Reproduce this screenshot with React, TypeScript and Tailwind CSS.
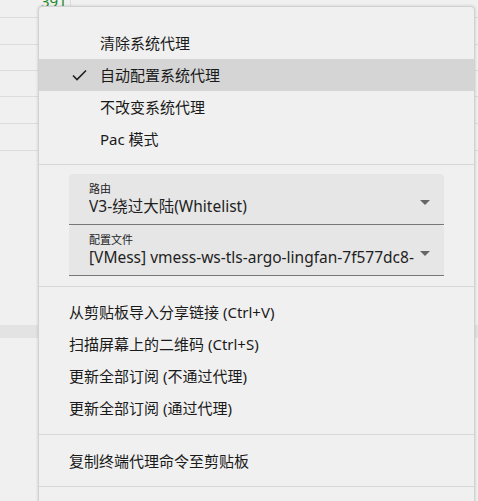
import React from "react";

const font = { fontFamily: '"Noto Sans", "Noto Sans CJK SC", sans-serif' };

const Check = () => (
  <svg width="15" height="12" viewBox="0 0 15 12" fill="none">
    <path d="M1 6.5 L5 10.5 L14 1.5" stroke="#1f1f1f" strokeWidth="1.6" />
  </svg>
);

const Caret = () => (
  <svg width="10" height="5" viewBox="0 0 10 5">
    <path d="M0 0 H10 L5 5 Z" fill="#666666" />
  </svg>
);

const ProxyItem = ({ label, checked }: { label: string; checked?: boolean }) => (
  <div className={"flex h-8 items-center " + (checked ? "bg-[#d5d5d5]" : "")}>
    <span className="flex w-[61px] justify-end pr-[13px]">{checked && <Check />}</span>
    <span>{label}</span>
  </div>
);

const SelectBox = ({ label, value }: { label: string; value: string }) => (
  <div className="flex h-[51px] items-center rounded-t-[4px] border-b border-[#777777] bg-[#e6e6e6] pl-[20px] pr-[14px]">
    <div className="min-w-0 flex-1 overflow-hidden">
      <div className="text-[11px] leading-[14px] text-[#222]">{label}</div>
      <div className="whitespace-nowrap text-[15.5px] leading-[20px] text-[#1f1f1f]">{value}</div>
    </div>
    <span className="ml-[5px] mt-[6px] flex w-[11px] justify-center">
      <Caret />
    </span>
  </div>
);

const ActionItem = ({ label }: { label: string }) => (
  <div className="flex h-8 items-center pl-[30px]">{label}</div>
);

export default function App() {
  const rows = [18, 27, 26, 26, 27, 27];
  return (
    <div className="relative h-[501px] w-[478px] overflow-hidden bg-[#f0f0f0]" style={font}>
      {/* spreadsheet behind the menu */}
      <div className="flex flex-col">
        {rows.map((h, i) => (
          <div key={i} className="relative border-b border-[#dcdcdc]" style={{ height: h }}>
            {i === 0 && (
              <>
                <span className="absolute left-[41px] top-[-8px] text-[15px] leading-[18px] text-[#1a8a2a]">391</span>
                <span className="absolute left-[70px] top-0 h-full border-l border-[#dcdcdc]" />
              </>
            )}
          </div>
        ))}
        <div className="mt-[174px] h-[13px] bg-[#e3e3e3]" />
      </div>

      {/* context menu */}
      <div className="absolute left-[38px] top-[6px] h-[510px] w-[437px] rounded-[4px] border border-[#d2d2d2] bg-[#f0f0f0] text-[15px] text-[#1a1a1a] shadow-[0_0_3px_rgba(0,0,0,0.18)]">
        <div className="pt-[20px] pb-[9px]">
          <ProxyItem label="清除系统代理" />
          <ProxyItem label="自动配置系统代理" checked />
          <ProxyItem label="不改变系统代理" />
          <ProxyItem label="Pac 模式" />
        </div>
        <div className="border-t border-[#d8d8d8]" />
        <div className="flex flex-col px-[30px] pt-[9px] pb-[10px]">
          <SelectBox label="路由" value="V3-绕过大陆(Whitelist)" />
          <SelectBox label="配置文件" value="[VMess] vmess-ws-tls-argo-lingfan-7f577dc8-bd1a" />
        </div>
        <div className="border-t border-[#d8d8d8]" />
        <div className="pt-[9px] pb-[10px]">
          <ActionItem label="从剪贴板导入分享链接 (Ctrl+V)" />
          <ActionItem label="扫描屏幕上的二维码 (Ctrl+S)" />
          <ActionItem label="更新全部订阅 (不通过代理)" />
          <ActionItem label="更新全部订阅 (通过代理)" />
        </div>
        <div className="border-t border-[#d8d8d8]" />
        <div className="pt-[10px] pb-[9px]">
          <ActionItem label="复制终端代理命令至剪贴板" />
        </div>
        <div className="border-t border-[#d8d8d8]" />
      </div>
    </div>
  );
}
